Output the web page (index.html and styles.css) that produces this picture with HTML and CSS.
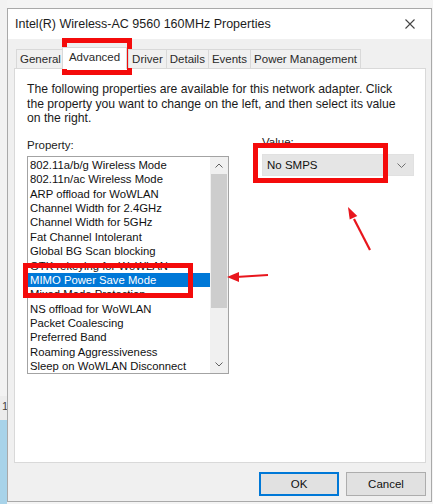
FILE: index.html
```html
<!DOCTYPE html>
<html lang="en">
<head>
    <meta charset="UTF-8">
    <meta name="viewport" content="width=device-width, initial-scale=1.0">
    <title>Intel(R) Wireless-AC 9560 160MHz Properties</title>
    <link rel="stylesheet" href="styles.css">
</head>
<body>
    <div class="desktop">
        <div class="behind">
            <div class="behind-top"></div>
            <div class="behind-num">1</div>
            <div class="behind-blue"></div>
        </div>

        <div class="window">
            <div class="titlebar">
                <span class="title">Intel(R) Wireless-AC 9560 160MHz Properties</span>
                <svg class="close" width="10" height="10" viewBox="0 0 10 10">
                    <path d="M0.5 0.5L9.5 9.5M9.5 0.5L0.5 9.5" stroke="#444" stroke-width="1.1" fill="none"/>
                </svg>
            </div>

            <div class="dialog">
                <ul class="tabs">
                    <li class="tab">General</li>
                    <li class="tab tab-active">Advanced</li>
                    <li class="tab">Driver</li>
                    <li class="tab">Details</li>
                    <li class="tab">Events</li>
                    <li class="tab">Power Management</li>
                </ul>

                <div class="panel">
                    <p class="desc">The following properties are available for this network adapter. Click<br>the property you want to change on the left, and then select its value<br>on the right.</p>

                    <div class="fields">
                        <div class="field-prop">
                            <div class="label">Property:</div>
                            <div class="listbox">
                                <ul class="items">
                                    <li>802.11a/b/g Wireless Mode</li>
                                    <li>802.11n/ac Wireless Mode</li>
                                    <li>ARP offload for WoWLAN</li>
                                    <li>Channel Width for 2.4GHz</li>
                                    <li>Channel Width for 5GHz</li>
                                    <li>Fat Channel Intolerant</li>
                                    <li>Global BG Scan blocking</li>
                                    <li>GTK rekeying for WoWLAN</li>
                                    <li class="selected">MIMO Power Save Mode</li>
                                    <li>Mixed Mode Protection</li>
                                    <li>NS offload for WoWLAN</li>
                                    <li>Packet Coalescing</li>
                                    <li>Preferred Band</li>
                                    <li>Roaming Aggressiveness</li>
                                    <li>Sleep on WoWLAN Disconnect</li>
                                </ul>
                                <div class="scrollbar">
                                    <div class="scroll-btn">
                                        <svg width="8" height="5" viewBox="0 0 8 5"><path d="M0.5 4.5L4 1L7.5 4.5" stroke="#606060" fill="none"/></svg>
                                    </div>
                                    <div class="scroll-track">
                                        <div class="scroll-thumb"></div>
                                    </div>
                                    <div class="scroll-btn">
                                        <svg width="8" height="5" viewBox="0 0 8 5"><path d="M0.5 0.5L4 4L7.5 0.5" stroke="#606060" fill="none"/></svg>
                                    </div>
                                </div>
                            </div>
                        </div>

                        <div class="field-value">
                            <div class="label label-value">Value:</div>
                            <div class="select">
                                <span>No SMPS</span>
                                <svg width="9" height="5" viewBox="0 0 9 5"><path d="M0.5 0.5L4.5 4.5L8.5 0.5" stroke="#707070" fill="none"/></svg>
                            </div>
                        </div>
                    </div>
                </div>

                <div class="buttons">
                    <button class="btn btn-default">OK</button>
                    <button class="btn">Cancel</button>
                </div>
            </div>
        </div>

        <!-- red annotations drawn over the screenshot -->
        <div class="mark mark-tab"></div>
        <div class="mark mark-item"></div>
        <div class="mark mark-value"></div>
        <svg class="arrows" width="433" height="504" viewBox="0 0 433 504">
            <path d="M268 275L236 277" stroke="#e8161d" stroke-width="2.2" fill="none"/>
            <path d="M227 277L239 272L239 282Z" fill="#e8161d"/>
            <path d="M370 250L354 219" stroke="#e8161d" stroke-width="2.2" fill="none"/>
            <path d="M348 207L357.3 215.9L349.7 219.6Z" fill="#e8161d"/>
        </svg>
    </div>
</body>
</html>
```

FILE: styles.css
```css
* {
    margin: 0;
    padding: 0;
    box-sizing: border-box;
}

body {
    background-color: #f4f4f4;
    font-family: "Liberation Sans", Arial, sans-serif;
    color: #111;
}

.desktop {
    position: relative;
    width: 433px;
    height: 504px;
    display: flex;
    overflow: hidden;
    background-color: #f4f4f4;
}

/* sliver of another window on the left */
.behind {
    width: 7px;
    display: flex;
    flex-direction: column;
}

.behind-top {
    flex: 1;
    background-color: #f2f2f2;
}

.behind-num {
    height: 24px;
    font-size: 11px;
    line-height: 20px;
    color: #444;
    padding-left: 2px;
    background-color: #ececec;
}

.behind-blue {
    height: 84px;
    background-color: #a8d3e9;
}

.window {
    margin-top: 8px;
    width: 425px;
    height: 494px;
    border: 1px solid #a9a9a9;
    background-color: #f0f0f0;
    display: flex;
    flex-direction: column;
}

.titlebar {
    height: 30px;
    background-color: #fff;
    display: flex;
    justify-content: space-between;
    align-items: center;
    padding: 0 16px 0 7px;
}

.title {
    font-size: 12.5px;
    color: #1c1c1c;
}

.dialog {
    flex: 1;
    padding: 8px 5px 5px 6px;
    display: flex;
    flex-direction: column;
}

.tabs {
    list-style: none;
    display: flex;
    align-items: flex-start;
    height: 21px;
    padding-left: 2px;
    position: relative;
    z-index: 1;
}

.tab {
    margin-top: 2px;
    height: 19px;
    padding: 0 3px;
    margin-right: -1px;
    border: 1px solid #d9d9d9;
    border-bottom: none;
    background-color: #f0f0f0;
    font-size: 11.5px;
    line-height: 18px;
    color: #2a2a2a;
}

.tab-active {
    margin: 0 1px 0 -2px;
    height: 22px;
    padding: 0 6px;
    background-color: #fff;
    position: relative;
    z-index: 2;
}

.panel {
    height: 395px;
    background-color: #fff;
    border: 1px solid #d9d9d9;
    padding: 13px 11px 0 12px;
}

.desc {
    font-size: 12.2px;
    line-height: 14.5px;
    color: #1a1a1a;
}

.fields {
    margin-top: 12.5px;
    display: grid;
    grid-template-columns: 202px 1fr;
    column-gap: 33px;
}

.label {
    font-size: 11.5px;
    line-height: 14px;
    color: #222;
    margin-bottom: 4px;
}

.label-value {
    margin-top: -3px;
    margin-bottom: 5px;
}

.listbox {
    height: 218px;
    border: 1px solid #a3a3a3;
    display: flex;
}

.items {
    flex: 1;
    list-style: none;
    padding-top: 1px;
}

.items li {
    height: 14.36px;
    line-height: 14.36px;
    padding-left: 2px;
    font-size: 11.3px;
    white-space: nowrap;
    color: #111;
}

.items li.selected {
    background-color: #0078d7;
    color: #fff;
}

.scrollbar {
    width: 18px;
    background-color: #f0f0f0;
    display: flex;
    flex-direction: column;
}

.scroll-btn {
    height: 17px;
    display: flex;
    align-items: center;
    justify-content: center;
}

.scroll-track {
    flex: 1;
}

.scroll-thumb {
    height: 134px;
    margin: 0 1px;
    background-color: #cdcdcd;
}

.select {
    height: 22px;
    background-color: #e5e5e5;
    border: 1px solid #e1e1e1;
    display: flex;
    align-items: center;
    justify-content: space-between;
    padding: 0 7px 0 4px;
    font-size: 11.5px;
    color: #111;
}

.buttons {
    margin-top: 9px;
    display: flex;
    justify-content: flex-end;
    gap: 7px;
}

.btn {
    width: 80px;
    height: 24px;
    border: 1px solid #adadad;
    background-color: #e1e1e1;
    font-family: "Liberation Sans", Arial, sans-serif;
    font-size: 11.5px;
    color: #111;
}

.btn-default {
    border: 2px solid #0078d7;
}

.mark {
    position: absolute;
    border: 5px solid #f40b0b;
}

.mark-tab {
    left: 62px;
    top: 38px;
    width: 70px;
    height: 37px;
}

.mark-item {
    left: 23px;
    top: 263px;
    width: 170px;
    height: 35px;
}

.mark-value {
    left: 253px;
    top: 143px;
    width: 135px;
    height: 40px;
}

.arrows {
    position: absolute;
    left: 0;
    top: 0;
    pointer-events: none;
}
```
